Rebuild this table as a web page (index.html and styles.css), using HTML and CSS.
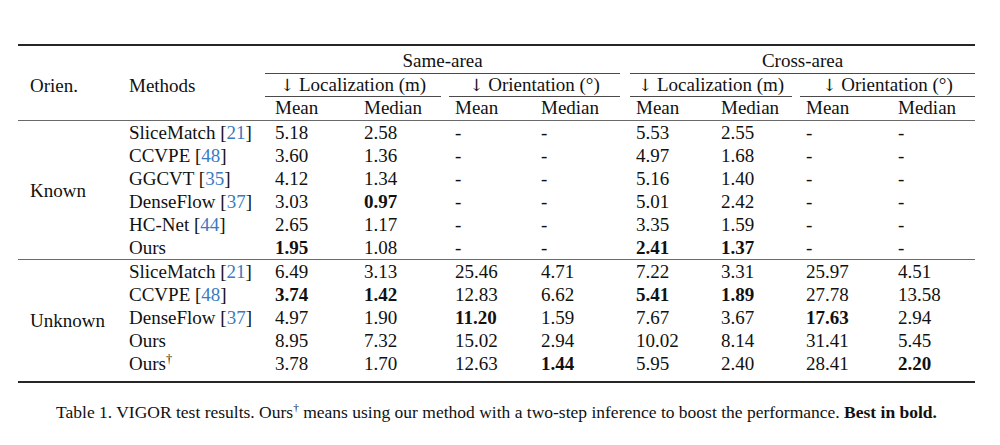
FILE: index.html
```html
<!DOCTYPE html>
<html lang="en">
<head>
<meta charset="utf-8">
<title>VIGOR test results</title>
<link rel="stylesheet" href="styles.css">
</head>
<body>
<div class="page">
  <table class="results">
    <colgroup>
      <col class="c1"><col class="c2"><col class="c3"><col class="c4"><col class="c5">
      <col class="c6"><col class="c7"><col class="c8"><col class="c9"><col class="c10">
    </colgroup>
    <thead>
      <tr class="h1">
        <th></th><th></th>
        <th colspan="4" class="span same"><div class="cm">Same-area</div></th>
        <th colspan="4" class="span cross"><div class="cm">Cross-area</div></th>
      </tr>
      <tr class="h2">
        <th class="lbl first">Orien.</th>
        <th class="lbl">Methods</th>
        <th colspan="2" class="span s-loc"><div class="cm"><span class="arrow">↓</span> Localization (m)</div></th>
        <th colspan="2" class="span s-ori"><div class="cm"><span class="arrow">↓</span> Orientation (°)</div></th>
        <th colspan="2" class="span c-loc"><div class="cm"><span class="arrow">↓</span> Localization (m)</div></th>
        <th colspan="2" class="span c-ori"><div class="cm"><span class="arrow">↓</span> Orientation (°)</div></th>
      </tr>
      <tr class="h3">
        <th></th><th></th>
        <th class="lbl">Mean</th><th class="lbl">Median</th>
        <th class="lbl">Mean</th><th class="lbl">Median</th>
        <th class="lbl">Mean</th><th class="lbl">Median</th>
        <th class="lbl">Mean</th><th class="lbl">Median</th>
      </tr>
    </thead>
    <tbody class="known">
      <tr><td rowspan="6" class="orien">Known</td><td>SliceMatch <span class="ref">[</span><a class="cite">21</a><span class="ref">]</span></td><td>5.18</td><td>2.58</td><td>-</td><td>-</td><td>5.53</td><td>2.55</td><td>-</td><td>-</td></tr>
      <tr><td>CCVPE <span class="ref">[</span><a class="cite">48</a><span class="ref">]</span></td><td>3.60</td><td>1.36</td><td>-</td><td>-</td><td>4.97</td><td>1.68</td><td>-</td><td>-</td></tr>
      <tr><td>GGCVT <span class="ref">[</span><a class="cite">35</a><span class="ref">]</span></td><td>4.12</td><td>1.34</td><td>-</td><td>-</td><td>5.16</td><td>1.40</td><td>-</td><td>-</td></tr>
      <tr><td>DenseFlow <span class="ref">[</span><a class="cite">37</a><span class="ref">]</span></td><td>3.03</td><td><b>0.97</b></td><td>-</td><td>-</td><td>5.01</td><td>2.42</td><td>-</td><td>-</td></tr>
      <tr><td>HC-Net <span class="ref">[</span><a class="cite">44</a><span class="ref">]</span></td><td>2.65</td><td>1.17</td><td>-</td><td>-</td><td>3.35</td><td>1.59</td><td>-</td><td>-</td></tr>
      <tr><td>Ours</td><td><b>1.95</b></td><td>1.08</td><td>-</td><td>-</td><td><b>2.41</b></td><td><b>1.37</b></td><td>-</td><td>-</td></tr>
    </tbody>
    <tbody class="unknown">
      <tr><td rowspan="5" class="orien">Unknown</td><td>SliceMatch <span class="ref">[</span><a class="cite">21</a><span class="ref">]</span></td><td>6.49</td><td>3.13</td><td>25.46</td><td>4.71</td><td>7.22</td><td>3.31</td><td>25.97</td><td>4.51</td></tr>
      <tr><td>CCVPE <span class="ref">[</span><a class="cite">48</a><span class="ref">]</span></td><td><b>3.74</b></td><td><b>1.42</b></td><td>12.83</td><td>6.62</td><td><b>5.41</b></td><td><b>1.89</b></td><td>27.78</td><td>13.58</td></tr>
      <tr><td>DenseFlow <span class="ref">[</span><a class="cite">37</a><span class="ref">]</span></td><td>4.97</td><td>1.90</td><td><b>11.20</b></td><td>1.59</td><td>7.67</td><td>3.67</td><td><b>17.63</b></td><td>2.94</td></tr>
      <tr><td>Ours</td><td>8.95</td><td>7.32</td><td>15.02</td><td>2.94</td><td>10.02</td><td>8.14</td><td>31.41</td><td>5.45</td></tr>
      <tr class="last"><td>Ours<sup>†</sup></td><td>3.78</td><td>1.70</td><td>12.63</td><td><b>1.44</b></td><td>5.95</td><td>2.40</td><td>28.41</td><td><b>2.20</b></td></tr>
    </tbody>
  </table>
  <p class="caption">Table 1. VIGOR test results. Ours<sup>†</sup> means using our method with a two-step inference to boost the performance. <b>Best in bold.</b></p>
</div>
</body>
</html>
```

FILE: styles.css
```css
html, body {
  margin: 0;
  padding: 0;
  background: #ffffff;
}

.page {
  padding: 44px 0 0 18px;
  font-family: "Liberation Serif", "Times New Roman", serif;
  color: #111111;
}

.results {
  border-collapse: collapse;
  width: 957px;
  table-layout: fixed;
  font-size: 19px;
}

.c1 { width: 101px; }
.c2 { width: 146px; }
.c3 { width: 89px; }
.c4 { width: 91px; }
.c5 { width: 86px; }
.c6 { width: 95px; }
.c7 { width: 85px; }
.c8 { width: 85px; }
.c9 { width: 92px; }
.c10 { width: 87px; }

.results thead {
  border-top: 2px solid #262626;
  border-bottom: 1px solid #6a6a6a;
}

.results th {
  font-weight: normal;
  padding: 0 0 0 10px;
  text-align: left;
  white-space: nowrap;
}

.results th.first {
  padding-left: 12px;
}

.results th.span {
  padding: 0;
  text-align: center;
}

.arrow {
  font-family: "DejaVu Serif", "DejaVu Sans", serif;
  font-size: 17px;
  color: #111111;
}

.cm {
  border-bottom: 1px solid #4a4a4a;
}

.h1 .cm {
  height: 24px;
  line-height: 24px;
  padding-top: 3px;
}

.h2 .cm,
.h2 th {
  height: 22px;
  line-height: 22px;
}

.h3 th {
  height: 23px;
  line-height: 21px;
  vertical-align: top;
}

.same .cm { margin-right: 6px; }
.cross .cm { margin-left: 4px; }
.s-loc .cm { margin-right: 4px; }
.s-ori .cm { margin-left: 4px; margin-right: 6px; }
.c-loc .cm { margin-left: 4px; margin-right: 4px; }
.c-ori .cm { margin-left: 4px; }

.results td {
  height: 23px;
  line-height: 23px;
  padding: 0 0 0 10px;
  white-space: nowrap;
}

.results td.orien {
  padding-left: 12px;
  vertical-align: middle;
}

.results tbody.known {
  border-bottom: 1px solid #6a6a6a;
}

.results tbody.unknown {
  border-bottom: 2px solid #262626;
}

.results tr.last td {
  padding-bottom: 6px;
}

.cite {
  color: #3a7bbf;
}

.results b,
.caption b {
  font-weight: bold;
}

sup {
  font-size: 0.65em;
  line-height: 0;
  vertical-align: 0.6em;
}

.caption {
  margin: 19px 0 0 0;
  width: 957px;
  text-align: center;
  font-size: 17.5px;
  line-height: 20px;
}
```
